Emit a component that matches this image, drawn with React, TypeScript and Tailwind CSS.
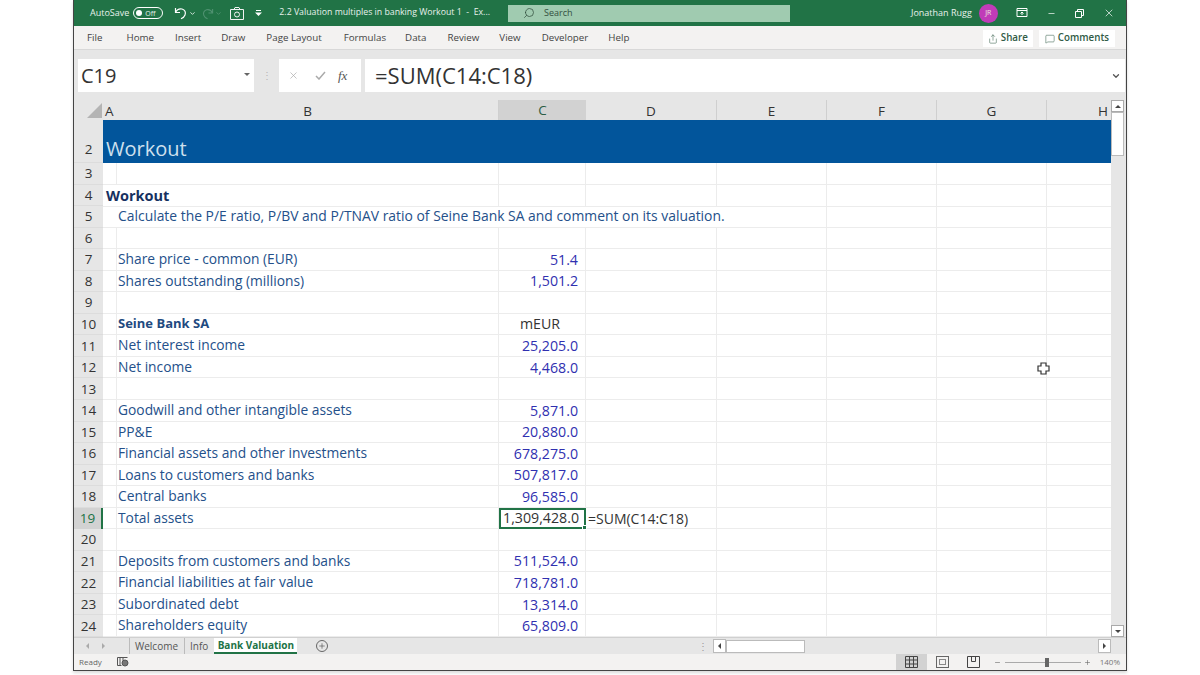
import type { ReactNode } from "react";
import { ChevronDown, Minus, Plus, Search, X, MessageSquare, Share } from "lucide-react";

type RowData = {
  n: number;
  b?: string;
  c?: string;
  boldB?: boolean;
  plainC?: boolean;
};

const columns = ["A", "B", "C", "D", "E", "F", "G", "H"];
const gridTemplate = "grid grid-cols-[14px_382px_87px_131px_110px_110px_110px_65px]";

const rows: RowData[] = [
  { n: 6 },
  { n: 7, b: "Share price - common (EUR)", c: "51.4" },
  { n: 8, b: "Shares outstanding (millions)", c: "1,501.2" },
  { n: 9 },
  { n: 10, b: "Seine Bank SA", c: "mEUR", boldB: true, plainC: true },
  { n: 11, b: "Net interest income", c: "25,205.0" },
  { n: 12, b: "Net income", c: "4,468.0" },
  { n: 13 },
  { n: 14, b: "Goodwill and other intangible assets", c: "5,871.0" },
  { n: 15, b: "PP&E", c: "20,880.0" },
  { n: 16, b: "Financial assets and other investments", c: "678,275.0" },
  { n: 17, b: "Loans to customers and banks", c: "507,817.0" },
  { n: 18, b: "Central banks", c: "96,585.0" },
  { n: 19, b: "Total assets" },
  { n: 20 },
  { n: 21, b: "Deposits from customers and banks", c: "511,524.0" },
  { n: 22, b: "Financial liabilities at fair value", c: "718,781.0" },
  { n: 23, b: "Subordinated debt", c: "13,314.0" },
  { n: 24, b: "Shareholders equity", c: "65,809.0" },
];

function RowHeader({ n, active }: { n: number; active?: boolean }) {
  return (
    <div
      className={
        active
          ? "w-[29px] shrink-0 flex items-center justify-center bg-[#d2d2d2] border-r-2 border-[#217346] text-[#217346] text-[13.5px]"
          : "w-[29px] shrink-0 flex items-center justify-center bg-[#e6e6e6] border-b border-[#dcdcdc] text-[#333] text-[13.5px]"
      }
    >
      {n}
    </div>
  );
}

function Cell({ noRight = false }: { noRight?: boolean }) {
  return <div className={noRight ? "border-b border-[#ececec] min-w-0" : "border-b border-r border-[#ececec] min-w-0"} />;
}

function Row({ n, b, c, boldB, plainC }: RowData) {
  const active = n === 19;
  return (
    <div className="flex h-[21.55px]">
      <RowHeader n={n} active={active} />
      <div className={"flex-1 grid-rows-[21.55px] " + gridTemplate}>
        <div className="border-b border-r border-[#ececec]" />
        <div className="border-b border-r border-[#ececec] flex items-center pl-[1px]">
          <span className={boldB ? "font-bold text-[#1f4a80] text-[13px]" : "text-[#24508a] text-[13.8px]"}>{b}</span>
        </div>
        {active ? (
          <div className="relative border-2 border-[#217346] flex items-center justify-end pr-[5px] text-[#333] text-[14.2px] leading-none">
            1,309,428.0
            <div className="absolute -right-[3px] -bottom-[3px] w-[5px] h-[5px] bg-[#217346] border border-white" />
          </div>
        ) : (
          <div
            className={
              "border-b border-r border-[#ececec] flex items-center justify-end pr-[7px] text-[14.2px] " +
              (plainC ? "text-[#333]" : "text-[#3030b0]")
            }
          >
            {plainC ? <span className="pr-[18px]">{c}</span> : c}
          </div>
        )}
        <div className={active ? "border-b border-r border-[#ececec] flex items-center pl-0.5 text-[#333] text-[14px] whitespace-nowrap" : "border-b border-r border-[#ececec]"}>
          {active ? "=SUM(C14:C18)" : null}
        </div>
        <Cell />
        <Cell />
        <Cell />
        <Cell noRight />
      </div>
    </div>
  );
}

function OverflowRow({ n, left, fillers, children }: { n: number; left: string; fillers: number; children: ReactNode }) {
  return (
    <div className="flex h-[21.55px]">
      <RowHeader n={n} />
      <div className={"flex-1 " + gridTemplate}>
        <div className={"flex items-center border-b border-r border-[#ececec] whitespace-nowrap " + left}>{children}</div>
        {Array.from({ length: fillers }, (_, i) => (
          <Cell key={i} noRight={i === fillers - 1} />
        ))}
      </div>
    </div>
  );
}

function GridIcon() {
  return (
    <svg width="13" height="12" viewBox="0 0 13 12" fill="none" stroke="#444" strokeWidth="1">
      <path d="M.5.5h12v11H.5zM.5 4h12M.5 8h12M4.500.5v11M8.500.5v11" />
    </svg>
  );
}

export default function App() {
  return (
    <div className="w-[1200px] h-[675px] bg-white overflow-hidden font-['Open_Sans',sans-serif] relative">
      <div className="ml-[73px] w-[1054px] h-[671px] flex flex-col border-x border-b border-[#444] shadow-[0_2px_3px_rgba(0,0,0,0.15)]">
        {/* Title bar */}
        <div className="h-[26px] shrink-0 bg-[#217346] text-[#e8f1ec] text-[9px] flex items-center">
          <span className="ml-[16px]">AutoSave</span>
          <div className="ml-[4px] w-[30px] h-[12px] rounded-full border border-white flex items-center pl-[2px] gap-[3px]">
            <div className="w-[6px] h-[6px] rounded-full bg-white" />
            <span className="text-[7px] leading-none">Off</span>
          </div>
          {/* undo */}
          <svg className="ml-[11px]" width="13" height="14" viewBox="0 0 13 14" fill="none" stroke="#fff" strokeWidth="1.2">
            <path d="M1.500 2v4.500H6M1.500 6.500C3 3.500 5.500 2.500 8 3c3 .7 4 3.500 3 6-.6 1.700-2.200 3-4 3.800" />
          </svg>
          <ChevronDown className="ml-[2px] w-[7px] h-[7px]" strokeWidth={3} />
          {/* redo, greyed out */}
          <svg className="ml-[6px]" width="12" height="13" viewBox="0 0 13 14" fill="none" stroke="#4f9170" strokeWidth="1.2">
            <path d="M11.500 2v4.500H7M11.500 6.500C10 3.500 7.500 2.500 5 3c-3 .7-4 3.500-3 6 .6 1.700 2.200 3 4 3.800" />
          </svg>
          <ChevronDown className="ml-[1px] w-[7px] h-[7px] text-[#4f9170]" strokeWidth={3} />
          {/* camera */}
          <svg className="ml-[8px]" width="14" height="13" viewBox="0 0 14 13" fill="none" stroke="#f2f2f2" strokeWidth="1">
            <path d="M.5 2.500h13v10H.5zM4 2.500l1-2h4l1 2" />
            <circle cx="7" cy="7.500" r="2.500" />
          </svg>
          <svg className="ml-[11px]" width="7" height="6" viewBox="0 0 7 6" fill="#fff">
            <path d="M1 0h5v1H1zM0 2.500h7L3.500 6z" />
          </svg>
          <span className="ml-[17px] whitespace-nowrap text-[8.75px]">2.2 Valuation multiples in banking Workout 1&nbsp; -&nbsp; Ex...</span>
          <div className="ml-[18px] w-[282px] h-[17px] bg-[#a0cbb0] flex items-center text-[#33503f] shrink-0">
            <Search className="ml-[15px] w-[12px] h-[12px] -scale-x-100" strokeWidth={1.5} />
            <span className="ml-[9px]">Search</span>
          </div>
          <span className="ml-[121px] whitespace-nowrap">Jonathan Rugg</span>
          <div className="ml-[7px] w-[19px] h-[19px] rounded-full bg-[#c03bb8] flex items-center justify-center text-[7px] text-[#eed]">JR</div>
          <svg className="ml-[18px]" width="12" height="10" viewBox="0 0 12 10" fill="none" stroke="#fff">
            <path d="M1 .5h10v8H1zM1 2.500h10M6 7V4M4.500 5.500 6 4l1.500 1.500" />
          </svg>
          <Minus className="ml-[19px] w-[9px] h-[9px]" />
          <svg className="ml-[19px]" width="9" height="9" viewBox="0 0 9 9" fill="none" stroke="#fff">
            <path d="M.5 2.500h6v6h-6zM2.500 2.500v-2h6v6h-2" />
          </svg>
          <X className="ml-[19px] w-[12px] h-[12px]" strokeWidth={1.5} />
        </div>

        {/* Ribbon tabs */}
        <div className="h-[24px] shrink-0 bg-[#f3f2f1] border-b border-[#d8d8d8] flex items-center pt-[2px] text-[9.75px] text-[#444]">
          <span className="ml-[13px]">File</span>
          <span className="ml-[24px]">Home</span>
          <span className="ml-[21px]">Insert</span>
          <span className="ml-[20px]">Draw</span>
          <span className="ml-[21px]">Page Layout</span>
          <span className="ml-[22px]">Formulas</span>
          <span className="ml-[19px]">Data</span>
          <span className="ml-[21px]">Review</span>
          <span className="ml-[20px]">View</span>
          <span className="ml-[21px]">Developer</span>
          <span className="ml-[20px]">Help</span>
          <div className="ml-auto mr-[3px] h-[17px] px-[5px] bg-white flex items-center gap-[3px] font-semibold text-[#315b46]">
            <Share className="w-[10px] h-[10px]" strokeWidth={1.25} />
            Share
          </div>
          <div className="ml-[3px] mr-[11px] h-[17px] px-[6px] bg-white flex items-center gap-[3px] font-semibold text-[#315b46]">
            <MessageSquare className="w-[10px] h-[10px]" strokeWidth={1.25} />
            Comments
          </div>
        </div>

        {/* Formula bar */}
        <div className="h-[50px] shrink-0 bg-[#e6e6e6] flex items-center pt-[1px]">
          <div className="ml-[4px] w-[176px] h-[33px] bg-white flex items-center text-[20px] text-[#333] pl-[3px] relative">
            C19
            <div className="absolute right-[4px] top-[14px] border-x-[3px] border-x-transparent border-t-[3px] border-t-[#666]" />
          </div>
          <div className="w-[25px] flex justify-center text-[#b5b5b5] text-[10px]">⋮</div>
          <div className="w-[82px] h-[33px] bg-white flex items-center text-[#aaa]">
            <X className="ml-[9px] w-[11px] h-[11px]" strokeWidth={1.5} />
            <svg className="ml-[16px]" width="11" height="9" viewBox="0 0 11 9" fill="none" stroke="#aaa" strokeWidth="1.5">
              <path d="M1 5l3 3 6-7" />
            </svg>
            <span className="ml-[12px] font-['Liberation_Serif',serif] italic text-[13px] text-[#555]">fx</span>
          </div>
          <div className="ml-[4px] flex-1 h-[33px] bg-white flex items-center text-[22px] text-[#333] pl-[10px] mr-[1px] relative">
            =SUM(C14:C18)
            <ChevronDown className="absolute right-[4px] top-[12px] w-[10px] h-[10px] text-[#555]" strokeWidth={3} />
          </div>
        </div>

        {/* Sheet */}
        <div className="flex-1 flex min-h-0">
          <div className="flex-1 min-w-0 flex flex-col">
            {/* Column headers */}
            <div className="h-[20px] shrink-0 flex bg-[#e6e6e6]">
              <div className="w-[29px] shrink-0 flex justify-end items-end">
                <div className="w-0 h-0 mr-[1px] mb-[2px] border-l-[15px] border-l-transparent border-b-[15px] border-b-[#b4b4b4]" />
              </div>
              <div className={"flex-1 text-[13.5px] text-[#333] " + gridTemplate}>
                {columns.map((c) => (
                  <div
                    key={c}
                    className={
                      c === "C"
                        ? "flex items-center justify-center bg-[#d2d2d2] border-b-2 border-[#217346] text-[#2b5c44]"
                        : c === "A"
                          ? "flex items-center pl-[2px]"
                          : c === "H"
                            ? "flex items-center justify-end pr-[4px]"
                            : "flex items-center justify-center border-r border-[#cfcfcf]"
                    }
                  >
                    {c}
                  </div>
                ))}
              </div>
            </div>

            {/* Banner row */}
            <div className="flex h-[43px] shrink-0">
              <div className="w-[29px] shrink-0 bg-[#e6e6e6] flex items-end justify-center pb-[3px] text-[13.5px] text-[#333] border-b border-[#dcdcdc]">
                2
              </div>
              <div className="flex-1 bg-[#02559b] text-[#cfe0ee] text-[20px] flex items-center pl-[3px] pt-[14px] leading-none">
                Workout
              </div>
            </div>

            <div className="flex-1 min-h-0 overflow-hidden">
              <Row n={3} />
              <OverflowRow n={4} fillers={6} left="col-span-2 pl-[3px] text-[14.5px] font-bold text-[#16305f]">
                Workout
              </OverflowRow>
              <OverflowRow n={5} fillers={3} left="col-span-5 pl-[15px] text-[13.9px] text-[#24508a]">
                Calculate the P/E ratio, P/BV and P/TNAV ratio of Seine Bank SA and comment on its valuation.
              </OverflowRow>
              {rows.map((r) => (
                <Row key={r.n} {...r} />
              ))}
            </div>
          </div>

          {/* Vertical scrollbar */}
          <div className="w-[15px] shrink-0 bg-[#e6e6e6] flex flex-col items-start">
            <div className="w-[13px] h-[12px] bg-white border border-[#aaa] flex items-center justify-center">
              <div className="border-x-[3px] border-x-transparent border-b-[3px] border-b-[#444]" />
            </div>
            <div className="w-[13px] h-[44px] bg-white border border-[#bbb]" />
            <div className="flex-1" />
            <div className="w-[13px] h-[12px] bg-white border border-[#aaa] flex items-center justify-center">
              <div className="border-x-[3px] border-x-transparent border-t-[3px] border-t-[#444]" />
            </div>
          </div>
        </div>

        {/* Sheet tabs */}
        <div className="h-[17px] shrink-0 bg-[#e6e6e6] border-t border-[#d0d0d0] flex items-center text-[10px] text-[#555]">
          <div className="ml-[12px] border-y-[3px] border-y-transparent border-r-[3px] border-r-[#aaa]" />
          <div className="ml-[13px] border-y-[3px] border-y-transparent border-l-[3px] border-l-[#aaa]" />
          <div className="ml-[24px] h-full border-l border-[#bbb] pl-[5px] pr-[6px] flex items-center">Welcome</div>
          <div className="h-full border-l border-[#bbb] pl-[5px] pr-[6px] flex items-center">Info</div>
          <div className="h-full w-[83px] bg-white border-b-2 border-[#217346] font-bold text-[#217346] flex items-center justify-center">
            Bank Valuation
          </div>
          <div className="ml-[19px] w-[12px] h-[12px] rounded-full border border-[#666] flex items-center justify-center">
            <Plus className="w-[8px] h-[8px]" />
          </div>
          <div className="ml-[370px] text-[#999]">⋮</div>
          <div className="ml-[5px] w-[13px] h-[14px] bg-white border border-[#bbb] flex items-center justify-center">
            <div className="border-y-[3px] border-y-transparent border-r-[3px] border-r-[#444]" />
          </div>
          <div className="w-[79px] h-[13px] bg-white border border-[#bbb]" />
          <div className="flex-1" />
          <div className="mr-[15px] w-[13px] h-[14px] bg-white border border-[#bbb] flex items-center justify-center">
            <div className="border-y-[3px] border-y-transparent border-l-[3px] border-l-[#444]" />
          </div>
        </div>

        {/* Status bar */}
        <div className="h-[16px] shrink-0 bg-[#f3f2f1] flex items-center text-[8px] text-[#666]">
          <span className="ml-[5px]">Ready</span>
          <svg className="ml-[15px]" width="12" height="10" viewBox="0 0 12 10" fill="none" stroke="#555">
            <path d="M.5.500h10M.5.500v8h4M3 .500v8M6 .500v3" />
            <circle cx="8" cy="6" r="3" fill="#777" />
          </svg>
          <div className="ml-auto w-[31px] h-full bg-[#d2d2d2] flex items-center justify-center">
            <GridIcon />
          </div>
          <div className="ml-[9px] w-[13px] h-[12px] border border-[#666] flex items-center justify-center">
            <div className="w-[7px] h-[6px] border border-[#888]" />
          </div>
          <svg className="ml-[18px]" width="13" height="12" viewBox="0 0 13 12" fill="none" stroke="#444">
            <path d="M.5.500h12v11H.5zM4.500.500v5h4v-5" />
          </svg>
          <Minus className="ml-[14px] w-[7px] h-[7px]" />
          <div className="ml-[4px] w-[76px] h-[1px] bg-[#aaa] relative">
            <div className="absolute left-[40px] -top-[4px] w-[4px] h-[9px] bg-[#666]" />
          </div>
          <Plus className="ml-[3px] w-[7px] h-[7px]" />
          <span className="ml-[9px] mr-[6px] text-[#777]">140%</span>
        </div>
      </div>

      {/* Mouse cursor */}
      <svg className="absolute left-[1037px] top-[362px]" width="13" height="13" viewBox="0 0 13 13" fill="#fff" stroke="#333" strokeWidth="1.2">
        <path d="M4 1h5v3h3v5H9v3H4V9H1V4h3z" />
      </svg>
    </div>
  );
}
